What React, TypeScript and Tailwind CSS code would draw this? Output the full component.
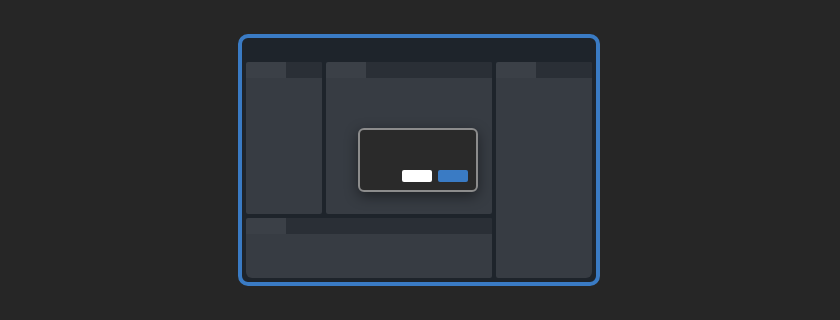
import React from 'react';

const Panel = ({ className = '' }: { className?: string }) => (
  <div className={`flex flex-col rounded-[2px] overflow-hidden bg-[#373c43] ${className}`}>
    <div className="flex h-4 bg-[#2a2f36]">
      <div className="w-10 bg-[#3b4047] rounded-tl-[2px]" />
    </div>
    <div className="flex-1" />
  </div>
);

export default function App() {
  return (
    <div className="flex h-[320px] w-full items-center justify-center bg-[#262626]">
      <div className="relative mr-[2px] flex h-[252px] w-[362px] flex-col rounded-[10px] border-4 border-[#3a7bc4] bg-[#1e242b]">
        <div className="h-6 shrink-0" />
        <div className="flex flex-1 gap-1 px-1 pb-1">
          <div className="flex w-[246px] flex-col gap-1">
            <div className="flex h-[152px] gap-1">
              <Panel className="w-[76px]" />
              <Panel className="flex-1" />
            </div>
            <Panel className="flex-1 rounded-bl-[6px]" />
          </div>
          <Panel className="flex-1 rounded-br-[6px]" />
        </div>

        <div className="absolute left-[116px] top-[90px] flex h-[64px] w-[120px] flex-col justify-end rounded-[6px] border-2 border-[#8c8c8c] bg-[#2a2a2a] pb-2 pr-2 shadow-[0_4px_14px_rgba(0,0,0,0.45)]">
          <div className="flex justify-end gap-1.5">
            <button className="h-3 w-[30px] rounded-[2px] bg-white" />
            <button className="h-3 w-[30px] rounded-[2px] bg-[#3a7bc4]" />
          </div>
        </div>
      </div>
    </div>
  );
}
